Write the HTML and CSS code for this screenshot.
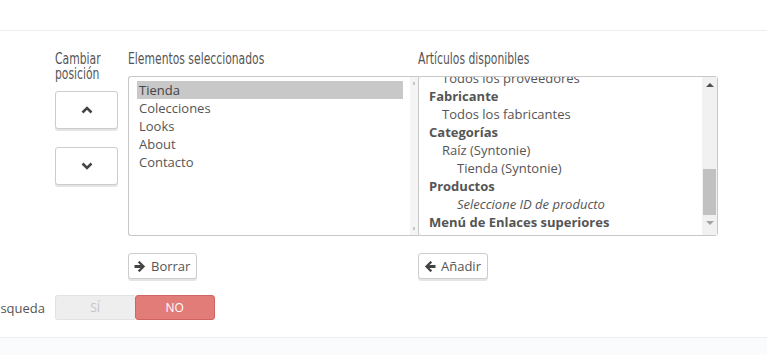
FILE: index.html
```html
<!DOCTYPE html>
<html lang="es">
<head>
  <meta charset="UTF-8" />
  <title>Menú superior</title>
  <link rel="stylesheet" href="styles.css">
</head>
<body>
  <div class="top"></div>

  <div class="panel">
    <div class="form-row">
      <div class="col-move">
        <div class="col-label"><span>Cambiar<br>posición</span></div>
        <button class="btn btn-move" type="button">
          <svg width="12" height="8" viewBox="0 0 12 8"><polyline points="1.5,6.5 6,2 10.5,6.5" fill="none" stroke="#444" stroke-width="2.6"/></svg>
        </button>
        <button class="btn btn-move" type="button">
          <svg width="12" height="8" viewBox="0 0 12 8"><polyline points="1.5,1.5 6,6 10.5,1.5" fill="none" stroke="#444" stroke-width="2.6"/></svg>
        </button>
      </div>

      <div class="col-selected">
        <div class="col-label"><span>Elementos seleccionados</span></div>
        <div class="listbox listbox-left">
          <ul class="items">
            <li class="selected">Tienda</li>
            <li>Colecciones</li>
            <li>Looks</li>
            <li>About</li>
            <li>Contacto</li>
          </ul>
          <div class="scroll scroll-off">
            <span class="tick"></span>
            <span class="tick"></span>
          </div>
        </div>
        <button class="btn btn-small" type="button">
          <svg width="12" height="11" viewBox="0 0 12 11"><path d="M0.5 4h6l-2.7-2.6 1.7-1.5 5.6 5.6-5.6 5.6-1.7-1.5 2.7-2.6h-6z" fill="#444"/></svg>
          Borrar
        </button>
      </div>

      <div class="col-available">
        <div class="col-label"><span>Artículos disponibles</span></div>
        <div class="listbox listbox-right">
          <div class="viewport">
            <ul class="items scrolled">
              <li class="opt">Todos los proveedores</li>
              <li class="group">Fabricante</li>
              <li class="opt">Todos los fabricantes</li>
              <li class="group">Categorías</li>
              <li class="opt">Raíz (Syntonie)</li>
              <li class="opt sub">Tienda (Syntonie)</li>
              <li class="group">Productos</li>
              <li class="opt sub hint">Seleccione ID de producto</li>
              <li class="group">Menú de Enlaces superiores</li>
            </ul>
          </div>
          <div class="scroll">
            <span class="arrow arrow-up"></span>
            <span class="thumb"></span>
            <span class="arrow arrow-down"></span>
          </div>
        </div>
        <button class="btn btn-small" type="button">
          <svg width="12" height="11" viewBox="0 0 12 11"><path d="M11.5 4h-6l2.7-2.6-1.7-1.5-5.6 5.6 5.6 5.6 1.7-1.5-2.7-2.6h6z" fill="#444"/></svg>
          Añadir
        </button>
      </div>
    </div>

    <div class="switch-row">
      <div class="switch-label">Búsqueda</div>
      <div class="switch">
        <span class="switch-yes">SÍ</span>
        <span class="switch-no">NO</span>
      </div>
    </div>
  </div>

  <div class="footer"></div>
</body>
</html>
```

FILE: styles.css
```css
body {
  margin: 0;
  height: 100vh;
  display: flex;
  flex-direction: column;
  font-family: "Open Sans", "Liberation Sans", sans-serif;
  font-size: 13px;
  color: #555;
  background: #fafbfc;
  overflow: hidden;
}
.top {
  height: 30px;
  flex-shrink: 0;
  background: #fff;
  border-bottom: 1px solid #eee;
}
.panel {
  flex-shrink: 0;
  background: #fff;
  padding: 17px 0 17px 0;
  border-bottom: 1px solid #eee;
}
.footer {
  flex: 1;
  background: #fafbfc;
}
.form-row {
  display: flex;
  padding-left: 55px;
}
.col-label {
  font-family: "DejaVu Sans Condensed", "Liberation Sans", sans-serif;
  font-size: 15px;
  line-height: 17px;
  height: 17px;
  padding-top: 3px;
  margin-bottom: 8px;
  color: #555;
  white-space: nowrap;
}
.col-label span {
  display: inline-block;
  transform: scaleX(0.8);
  transform-origin: left center;
}
.col-move {
  width: 63px;
  margin-right: 10px;
  display: flex;
  flex-direction: column;
}
.col-move .col-label {
  line-height: 15px;
  height: 30px;
  padding-top: 4px;
  margin-bottom: 9px;
}
.col-selected {
  width: 290px;
}
.col-available {
  width: 300px;
}

.btn {
  font-family: "Open Sans", "Liberation Sans", sans-serif;
  box-sizing: border-box;
  background: #fff;
  border: 1px solid #ccc;
  border-radius: 3px;
  box-shadow: 0 2px 0 #e4e4e4;
  color: #555;
  padding: 0;
  cursor: pointer;
  display: flex;
  align-items: center;
  justify-content: center;
}
.btn-move {
  width: 63px;
  height: 38px;
  margin-bottom: 18px;
}
.btn-small {
  height: 26px;
  margin-top: 17px;
  padding: 0 6px 0 5px;
  font-size: 13px;
  gap: 5px;
}

.listbox {
  display: flex;
  height: 160px;
  box-sizing: border-box;
  border: 1px solid #c7c7c7;
  border-radius: 3px;
  background: #fff;
}
.listbox-left {
  width: 291px;
  margin-right: -1px;
  border-right: none;
  border-radius: 3px 0 0 3px;
}
.listbox-right {
  width: 300px;
}
.items {
  list-style: none;
  margin: 0;
  padding: 4px 7px 0 8px;
  flex: 1;
}
.items li {
  height: 18px;
  line-height: 18px;
  padding: 0 2px;
  white-space: nowrap;
}
.items li.selected {
  background: #c8c8c8;
  color: #444;
}
.viewport {
  flex: 1;
  overflow: hidden;
}
.items.scrolled {
  margin-top: -8px;
  padding-top: 0;
}
.items .group {
  font-weight: bold;
}
.items .opt {
  padding-left: 15px;
}
.items .opt.sub {
  padding-left: 30px;
}
.items .hint {
  font-style: italic;
}

.scroll {
  width: 15px;
  background: #f1f1f1;
  display: flex;
  flex-direction: column;
  align-items: center;
}
.scroll-off {
  width: 9px;
  background: #f4f4f4;
  border-right: 1px solid #e2e2e2;
  justify-content: space-between;
  padding: 5px 0;
  box-sizing: border-box;
}
.tick {
  display: block;
  width: 2px;
  height: 3px;
  background: #c8c8c8;
}
.arrow {
  display: block;
  width: 0;
  height: 0;
  border-left: 4px solid transparent;
  border-right: 4px solid transparent;
}
.arrow-up {
  margin-top: 6px;
  border-bottom: 4px solid #505050;
}
.arrow-down {
  margin-top: 6px;
  border-top: 4px solid #a3a3a3;
}
.thumb {
  display: block;
  width: 13px;
  height: 46px;
  margin-top: 82px;
  background: #c1c1c1;
}

.switch-row {
  display: flex;
  align-items: center;
  margin-top: 16px;
  height: 25px;
}
.switch-label {
  width: 45px;
  margin-right: 10px;
  display: flex;
  justify-content: flex-end;
  white-space: nowrap;
  font-size: 13px;
}
.switch {
  display: flex;
  width: 160px;
  height: 25px;
  font-size: 12px;
}
.switch span {
  flex: 1;
  display: flex;
  align-items: center;
  justify-content: center;
  box-sizing: border-box;
}
.switch-yes {
  background: #eee;
  color: #c4c4c4;
  border: 1px solid #e2e2e2;
  border-right: none;
  border-radius: 3px 0 0 3px;
}
.switch-no {
  background: #e27c79;
  color: #fff;
  border: 1px solid #d06461;
  border-radius: 3px;
}
```
